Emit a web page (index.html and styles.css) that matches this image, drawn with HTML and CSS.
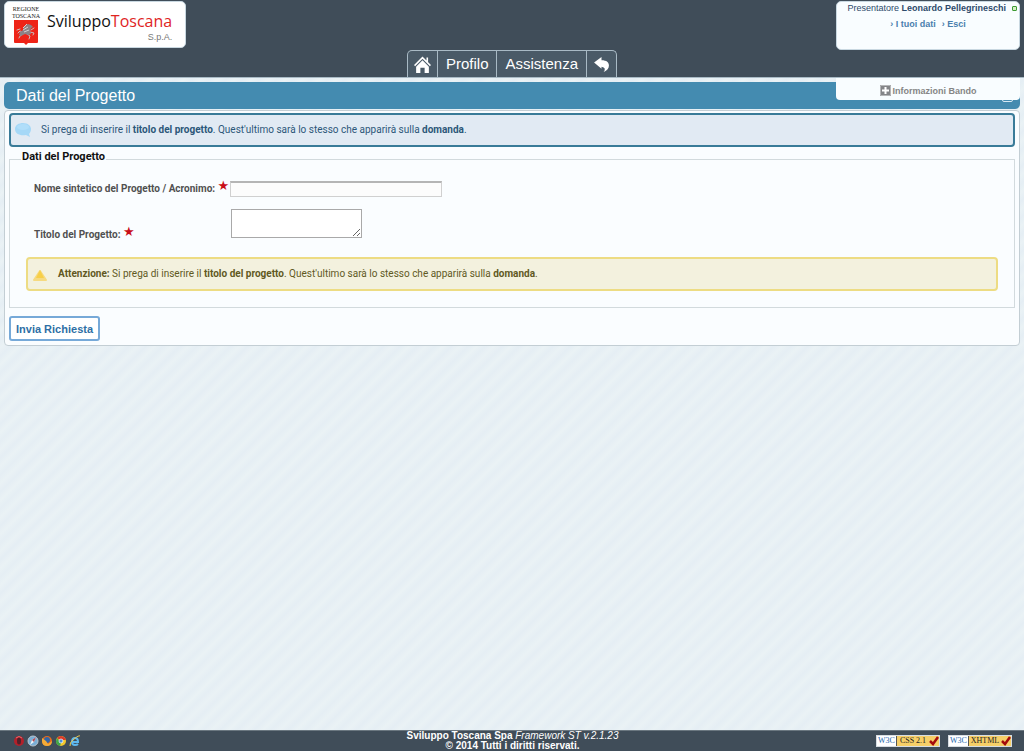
FILE: index.html
```html
<!DOCTYPE html>
<html lang="it">
<head>
<meta charset="utf-8">
<title>Dati del Progetto - Sviluppo Toscana</title>
<link rel="stylesheet" href="styles.css">
</head>
<body>
<header class="header">
  <a class="logo" href="#">
    <span class="crest">
      <span class="crest-text">REGIONE<br>TOSCANA</span>
      <svg class="crest-shield" viewBox="0 0 24 25" aria-hidden="true">
        <path fill="#ee2418" d="M0 0h24v22q0 1-1 1H14l-2 2-2-2H1q-1 0-1-1z"/>
        <path fill="none" stroke="#c9bdbc" stroke-linecap="round" stroke-linejoin="round" d="M4 13l2-2 3 1M3 10l3-1M9 14l-3 2-1 2M13 14l3 2-1 3M17 10l3-2M16 12l4 1-1 2"/>
        <path fill="#8d8285" d="M6 12l3-2 1-3 4-3 3 1 2 2-2 1-1 3 1 3-3 1-3-1-4 2-2-1z"/>
        <path fill="none" stroke="#d5d2d4" d="M9 8l4-4M9 10l5-3M10 12l5-2"/>
      </svg>
    </span>
    <span class="wordmark">
      <span class="wordmark-name">Sviluppo<span class="wordmark-red">Toscana</span></span>
      <span class="wordmark-spa">S.p.A.</span>
    </span>
  </a>
  <nav class="nav">
    <a class="nav-item nav-item-icon" href="#" aria-label="Home">
      <svg class="nav-icon" viewBox="0 0 16 16" aria-hidden="true"><path fill="#fff" d="M8 4l6 6v6h-4v-5H6v5H2v-6z"/><path fill="none" stroke="#fff" stroke-width="1.5" d="M0.5 9L8 1.500 15.500 9M12.500 1.500v4"/></svg>
    </a>
    <a class="nav-item" href="#">Profilo</a>
    <a class="nav-item" href="#">Assistenza</a>
    <a class="nav-item nav-item-icon" href="#" aria-label="Indietro">
      <svg class="nav-icon" viewBox="0 0 16 16" aria-hidden="true"><path fill="#fff" d="M1 6l7-5v3c5 0 7 2 7 5q0 4-5 6 3-4-2-5v2z"/></svg>
    </a>
  </nav>
  <div class="user">
    <div class="user-name"><span>Presentatore <b>Leonardo Pellegrineschi</b></span><span class="status"></span></div>
    <div class="user-links">
      <a href="#">› I tuoi dati</a>
      <a href="#">› Esci</a>
    </div>
  </div>
</header>
<main class="main">
  <div class="title-bar">
    <h1 class="title">Dati del Progetto</h1>
    <span class="title-toggle"></span>
    <button class="info-tab" type="button">
      <svg class="plus" viewBox="0 0 11 11" aria-hidden="true"><path fill="#848588" d="M0 0h11v11H0z"/><path fill="none" stroke="#b5b6b8" d="M.5.5h10v10H.5z"/><path fill="none" stroke="#fff" stroke-width="2" d="M5.500 2v7M2 5.500h7"/></svg>
      Informazioni Bando
    </button>
  </div>
  <form class="panel">
    <div class="note note-info">
      <svg class="note-icon" viewBox="0 0 17 16" aria-hidden="true"><path fill="#a5d8f7" d="M8 1c5 0 8 3 8 6 0 2-1 4-2 5l1 3-4-2C5 14 0 12 0 7c0-4 4-6 8-6z"/><ellipse cx="8" cy="5" rx="6" ry="3" fill="#b0defa"/></svg>
      <p class="note-text">Si prega di inserire il <b>titolo del progetto</b>. Quest'ultimo sarà lo stesso che apparirà sulla <b>domanda</b>.</p>
    </div>
    <fieldset class="group">
      <legend class="legend">Dati del Progetto</legend>
      <div class="row">
        <label class="label" for="nome">Nome sintetico del Progetto / Acronimo: <span class="star">★</span></label>
        <input class="field" id="nome" type="text">
      </div>
      <div class="row row-area">
        <label class="label" for="titolo">Titolo del Progetto: <span class="star">★</span></label>
        <textarea class="area" id="titolo"></textarea>
      </div>
      <div class="note note-warn">
        <svg class="note-icon" viewBox="0 0 17 16" aria-hidden="true"><path fill="#f6da80" stroke="#f6da80" stroke-width="2" stroke-linejoin="round" d="M8 5l6 9H2z"/><path fill="#f7cf48" d="M8 4l4 8H4z"/></svg>
        <p class="note-text"><b>Attenzione:</b> Si prega di inserire il <b>titolo del progetto</b>. Quest'ultimo sarà lo stesso che apparirà sulla <b>domanda</b>.</p>
      </div>
    </fieldset>
    <button class="submit" type="submit">Invia Richiesta</button>
  </form>
</main>
<footer class="footer">
  <div class="browsers">
    <svg class="browser" viewBox="0 0 12 12" aria-hidden="true"><circle cx="6" cy="6" r="5" fill="#b3202a"/><ellipse cx="6" cy="6" rx="2" ry="3.500" fill="#51212b"/><path fill="none" stroke="#e46b70" d="M3 3q3-3 6 0"/></svg>
    <svg class="browser" viewBox="0 0 12 12" aria-hidden="true"><circle cx="6" cy="6" r="5" fill="#79aed6" stroke="#b9c4cd"/><path fill="#eef4f8" d="M9 2L7 7 3 10l2-5z"/><path fill="#b04c55" d="M9 2L7 7 5 5z"/></svg>
    <svg class="browser" viewBox="0 0 12 12" aria-hidden="true"><circle cx="6" cy="6" r="5" fill="#e56b1c"/><circle cx="6" cy="5" r="3" fill="#3465a4"/><path fill="#f4ab37" d="M1 3l4 3 2 3 4-3q0 5-5 5T1 6z"/></svg>
    <svg class="browser" viewBox="0 0 12 12" aria-hidden="true"><circle cx="6" cy="6" r="5" fill="#f3c72d"/><path fill="#d93a2b" d="M6 6L2 3q4-4 8 0l1 2H6z"/><path fill="#40a64a" d="M2 3l4 5-1 3Q-1 9 2 3z"/><circle cx="6" cy="6" r="2" fill="#4a8fe0" stroke="#fff" stroke-width=".7"/></svg>
    <svg class="browser" viewBox="0 0 12 12" aria-hidden="true"><path fill="none" stroke="#5eb8ef" stroke-width="2" d="M3 7h6q0-4-3-4T3 7q0 3 3 3 2 0 3-1"/><path fill="none" stroke="#efc84a" d="M1 11Q0 8 5 4t6-3"/></svg>
  </div>
  <div class="credits"><b>Sviluppo Toscana Spa</b> <i>Framework ST v.2.1.23</i><br><b>© 2014 Tutti i diritti riservati.</b></div>
  <div class="badges">
    <a class="badge" href="#"><span class="badge-w3c">W3C</span><span class="badge-name">CSS 2.1</span><svg class="check" viewBox="0 0 10 10" aria-hidden="true"><path fill="none" stroke="#a50b0b" stroke-width="2.500" d="M1 5l3 3 5-7"/></svg></a>
    <a class="badge" href="#"><span class="badge-w3c">W3C</span><span class="badge-name">XHTML</span><svg class="check" viewBox="0 0 10 10" aria-hidden="true"><path fill="none" stroke="#a50b0b" stroke-width="2.500" d="M1 5l3 3 5-7"/></svg></a>
  </div>
</footer>
</body>
</html>
```
FILE: styles.css
```css
* { box-sizing: border-box; }
body {
  margin: 0;
  min-height: 100vh;
  display: flex;
  flex-direction: column;
  font: 10px/12px "Liberation Sans", Arial, sans-serif;
  color: #505050;
  background: repeating-linear-gradient(135deg, #e5eef4 0, #eaf2f5 6px, #e5eef4 12px);
}
a { color: inherit; text-decoration: none; }
button { font: inherit; cursor: pointer; }

.header {
  display: grid;
  grid-template-columns: 1fr auto 1fr;
  align-items: start;
  min-height: 78px;
  padding: 1px 4px 0;
  background: #404d59;
  border-bottom: 1px solid #a9bac5;
}
.logo {
  justify-self: start;
  display: flex;
  gap: 8px;
  width: 182px;
  height: 47px;
  padding: 4px 8px;
  background: #fff;
  border: 1px solid #c9d8e1;
  border-radius: 5px;
}
.crest { display: flex; flex-direction: column; align-items: center; width: 26px; }
.crest-text { font: 6px/7px "Liberation Serif", serif; text-align: center; color: #222; }
.crest-shield { width: 24px; height: 25px; flex: none; }
.wordmark { display: flex; flex-direction: column; padding-top: 4px; }
.wordmark-name { font: 16px/22px "Open Sans", "Noto Sans", sans-serif; color: #111; }
.wordmark-red { color: #e0251f; }
.wordmark-spa { align-self: flex-end; font: 9px/10px "Liberation Sans", sans-serif; color: #777; }

.nav {
  align-self: end;
  display: flex;
  border: 1px solid #a9bac5;
  border-bottom: 0;
  border-radius: 5px 5px 0 0;
  background: #4a5a67;
}
.nav-item {
  display: flex;
  align-items: center;
  height: 26px;
  padding: 0 8px;
  font-size: 15px;
  line-height: 24px;
  color: #fff;
}
.nav-item-icon { padding: 0 6px; }
.nav-item + .nav-item { border-left: 1px solid #a9bac5; }
.nav-icon { width: 17px; height: 17px; }

.user {
  justify-self: end;
  width: 184px;
  height: 49px;
  padding-top: 1px;
  font-size: 9px;
  text-align: center;
  color: #2d4a6b;
  background: #f9fdff;
  border: 1px solid #c9d8e1;
  border-radius: 5px;
}
.user-name { display: flex; align-items: center; justify-content: flex-end; gap: 6px; padding-right: 2px; line-height: 11px; }
.status { width: 5px; height: 5px; background: #d5f0c5; border: 1px solid #3c9a32; border-radius: 1px; }
.user-links { display: flex; justify-content: center; gap: 6px; padding-top: 4px; font-weight: bold; color: #4a7fae; }

.main { flex: 1; padding: 4px 4px 0; }
.title-bar {
  position: relative;
  height: 27px;
  padding-left: 12px;
  background: #448bb0;
  border-radius: 5px;
}
.title { margin: 0; font-size: 16px; font-weight: normal; line-height: 27px; color: #fff; }
.title-toggle {
  position: absolute;
  right: 7px;
  bottom: 7px;
  width: 11px;
  height: 11px;
  border: 1px solid #d7e9f4;
  border-radius: 2px;
}
.info-tab {
  position: absolute;
  top: -4px;
  right: 0;
  display: flex;
  align-items: center;
  justify-content: center;
  gap: 2px;
  width: 184px;
  height: 22px;
  padding: 3px 0 0;
  font-size: 9px;
  font-weight: bold;
  color: #858585;
  background: #f9fdff;
  border: 0;
  border-radius: 0 0 4px 4px;
}
.plus { width: 11px; height: 11px; }

.panel {
  margin-top: 1px;
  padding: 2px 4px 4px;
  background: #fafdff;
  border: 1px solid #c3ced4;
  border-radius: 4px;
}
.note {
  display: flex;
  align-items: center;
  gap: 9px;
  min-height: 34px;
  padding: 0 4px;
  border-radius: 4px;
}
.note-icon { flex: none; width: 17px; height: 16px; }
.note-text { margin: 0; }
.note-text, .label, .legend { font-family: Roboto, "Liberation Sans", sans-serif; }
.note-info { color: #2c5779; background: #e1eaf3; border: 2px solid #397b98; }
.note-warn { margin-top: 14px; color: #61591f; background: #f3f1de; border: 2px solid #eddc83; }

.group {
  margin: 3px 0 8px;
  padding: 12px 16px 16px;
  border: 1px solid #d2dadd;
}
.legend { margin-left: -5px; padding: 0 1px 4px; font-size: 11px; line-height: 14px; font-weight: bold; color: #111; }
.row { display: flex; align-items: center; padding-left: 8px; }
.row-area { align-items: flex-end; min-height: 34px; margin-top: 12px; }
.label { width: 196px; flex: none; font-weight: bold; line-height: 16px; color: #505050; white-space: nowrap; }
.star { font: 13px/12px "DejaVu Sans", sans-serif; color: #c90e18; vertical-align: 2px; }
.field { width: 212px; height: 16px; padding: 0 2px; background: #fcfcfc; border: 1px solid #d0d0d0; border-top: 2px solid #b5b5b5; }
.area { align-self: flex-start; width: 131px; height: 29px; margin-left: 1px; background: #fff; border: 1px solid #a9a9a9; }
.submit {
  display: block;
  height: 25px;
  padding: 0 5px;
  font-size: 11px;
  font-weight: bold;
  color: #2e6fa5;
  background: #fff;
  border: 2px solid #76a9d8;
  border-radius: 3px;
}

.footer {
  display: grid;
  grid-template-columns: 1fr auto 1fr;
  align-items: center;
  min-height: 21px;
  padding: 0 12px 0 13px;
  color: #fff;
  background: #404d59;
  border-top: 1px solid #6b7780;
}
.browsers { display: flex; gap: 2px; }
.browser { width: 12px; height: 12px; }
.credits { font-size: 10px; line-height: 10px; text-align: center; }
.badges { display: flex; justify-content: flex-end; gap: 8px; }
.badge {
  display: flex;
  align-items: center;
  width: 64px;
  height: 12px;
  font: 8px/10px "Liberation Serif", serif;
  color: #222;
  background: #f6cf68;
  border: 1px solid #d7dde2;
}
.badge-w3c { width: 20px; height: 10px; text-align: center; color: #2466ad; background: #fff; border-right: 1px solid #555; }
.badge-name { flex: 1; text-align: center; white-space: nowrap; }
.check { width: 10px; height: 10px; }
```
